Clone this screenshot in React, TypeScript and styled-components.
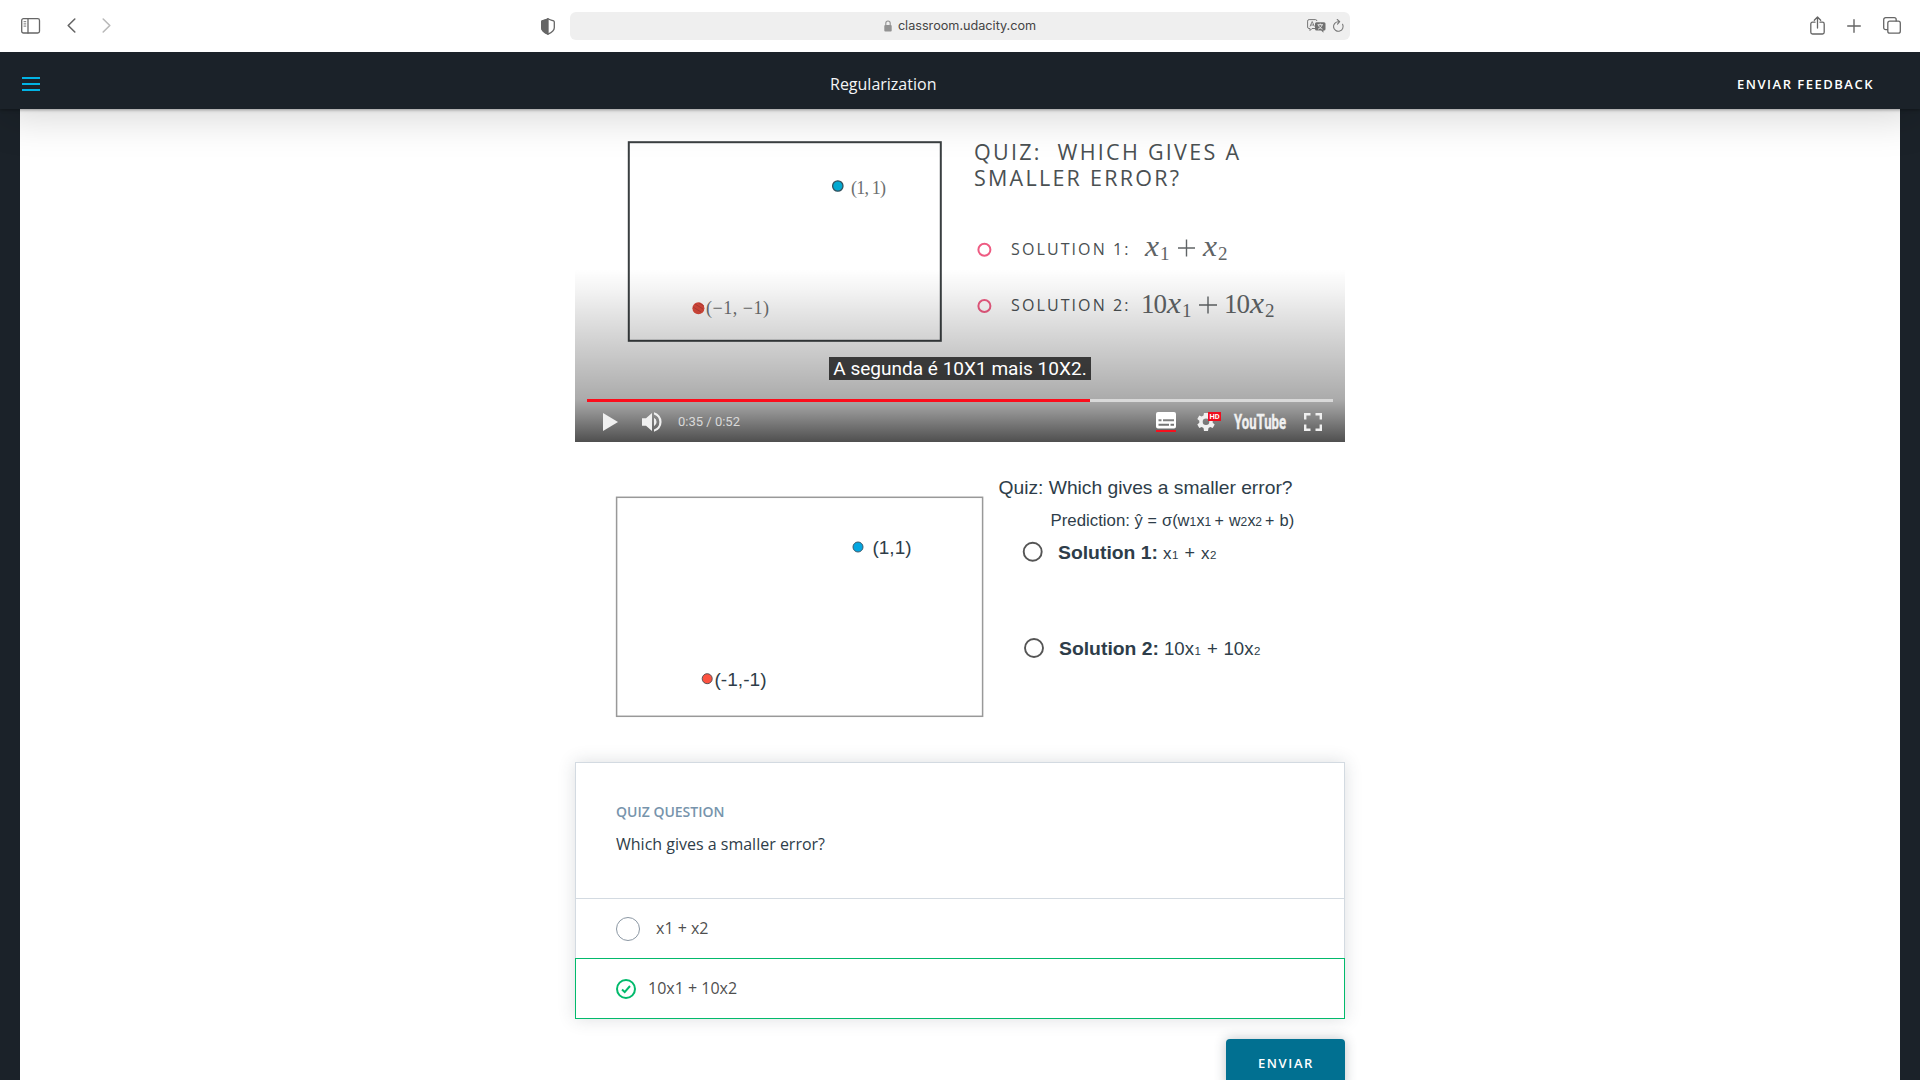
import React from "react";
import styled, { createGlobalStyle } from "styled-components";

const GlobalStyle = createGlobalStyle`
  *, *::before, *::after { box-sizing: border-box; }
  html, body { margin: 0; padding: 0; overflow: hidden; }
  body { font-family: "Open Sans", "Noto Sans", sans-serif; background: #1b2229; }
  svg { display: block; overflow: visible; }
`;

const Window = styled.div`
  width: 1920px;
  height: 1080px;
  overflow: hidden;
  display: flex;
  flex-direction: column;
`;

const BrowserBar = styled.div`
  flex: none;
  height: 52px;
  background: #fff;
  display: grid;
  grid-template-columns: 541px auto 1fr;
  align-items: center;
  padding-right: 19px;
  z-index: 3;
`;

const IconGroup = styled.div<{ $gap: number; $left?: number; $end?: boolean }>`
  display: flex;
  align-items: center;
  gap: ${(p) => p.$gap}px;
  padding-left: ${(p) => p.$left ?? 0}px;
  padding-bottom: 1px;
  justify-content: ${(p) => (p.$end ? "flex-end" : "flex-start")};
`;

const AddressGroup = styled.div`
  display: flex;
  align-items: center;
  gap: 15px;
`;

const AddressBar = styled.div`
  width: 780px;
  height: 28px;
  border-radius: 6px;
  background: #efefef;
  display: grid;
  grid-template-columns: 60px 1fr 60px;
  align-items: center;
  padding-right: 6px;
`;

const Address = styled.div`
  grid-column: 2;
  display: flex;
  align-items: center;
  justify-content: center;
  gap: 6px;
  padding: 0 0 1px 6px;
  font: 12.65px/18px Inter, sans-serif;
  color: #444;
`;

const Header = styled.header`
  flex: none;
  height: 57px;
  background: #1b2229;
  display: grid;
  grid-template-columns: 808px auto 1fr;
  align-items: center;
  padding: 7px 46px 0 22px;
  position: relative;
  z-index: 2;
  box-shadow: 0 1px 3px rgba(0, 0, 0, 0.35), 0 6px 44px rgba(0, 0, 0, 0.18);
`;

const MenuButton = styled.div`
  width: 18px;
  display: grid;
  gap: 4px;
`;

const MenuLine = styled.span`
  height: 2px;
  background: #02b3e4;
`;

const Title = styled.h1`
  margin: 0;
  font-size: 16px;
  line-height: 24px;
  font-weight: 400;
  color: #f4f5f6;
`;

const Feedback = styled.div`
  justify-self: end;
  font-size: 13px;
  line-height: 20px;
  font-weight: 600;
  letter-spacing: 1.5px;
  color: #fff;
`;

const Main = styled.main`
  flex: 1;
  min-height: 0;
  margin: 0 20px;
  background: #fff;
  display: flex;
  flex-direction: column;
  align-items: center;
`;

const Column = styled.div`
  width: 770px;
  display: flex;
  flex-direction: column;
`;

const Player = styled.section`
  height: 333px;
  display: grid;
  grid-template: 100% / 100%;
  background: #fff;
`;

const Frame = styled.div`
  grid-area: 1 / 1;
`;

const Overlay = styled.div`
  grid-area: 1 / 1;
  display: flex;
  flex-direction: column;
  align-items: stretch;
  padding: 248px 12px 0;
  background: linear-gradient(
    to bottom,
    rgba(0, 0, 0, 0) 160px,
    rgba(0, 0, 0, 0.045) 180px,
    rgba(0, 0, 0, 0.16) 225px,
    rgba(0, 0, 0, 0.25) 260px,
    rgba(0, 0, 0, 0.33) 290px,
    rgba(0, 0, 0, 0.43) 303px,
    rgba(0, 0, 0, 0.69) 333px
  );
`;

const Caption = styled.div`
  align-self: center;
  height: 23px;
  padding: 0 4.5px;
  background: rgba(8, 8, 8, 0.74);
  color: #fff;
  font: 19.05px/23px Roboto, sans-serif;
  white-space: nowrap;
`;

const Track = styled.div`
  margin-top: 19px;
  height: 3px;
  background: #d9d9d9;
`;

const Played = styled.div`
  width: 503px;
  height: 3px;
  background: #fb0d1b;
`;

const Controls = styled.div`
  height: 40px;
  display: flex;
  align-items: center;
  padding: 0 11px 0 16px;
`;

const Time = styled.div`
  margin-left: 16px;
  flex: 1;
  font: 13px/20px Roboto, sans-serif;
  color: #d9d9d9;
`;

const ControlIcon = styled.div<{ $left?: number }>`
  margin-left: ${(p) => p.$left ?? 0}px;
`;

const Figure = styled.div`
  height: 320px;
`;

const Card = styled.section`
  border: 1px solid #d3dae1;
  border-bottom: 0;
  background: #fff;
  box-shadow: 0 0 16px rgba(46, 61, 73, 0.17);
  height: 257px;
`;

const Prompt = styled.div`
  height: 135px;
  padding: 39px 40px 0;
`;

const Eyebrow = styled.div`
  font-size: 14px;
  line-height: 20px;
  font-weight: 600;
  color: #7794ac;
`;

const Question = styled.div`
  margin-top: 11px;
  font-size: 16px;
  line-height: 22px;
  color: #2e3d49;
`;

const Option = styled.div<{ $correct?: boolean }>`
  display: flex;
  align-items: center;
  height: ${(p) => (p.$correct ? 61 : 60)}px;
  margin: ${(p) => (p.$correct ? "0 -1px" : "0")};
  padding: 0 40px;
  border: ${(p) => (p.$correct ? "1px solid #02ba6c" : "0")};
  border-top: 1px solid ${(p) => (p.$correct ? "#02ba6c" : "#d3dae1")};
  gap: ${(p) => (p.$correct ? 12 : 16)}px;
  color: #4f4f4f;
`;

const OptionText = styled.span`
  padding-bottom: 2px;
  font-size: 16px;
  line-height: 22px;
`;

const Radio = styled.span`
  width: 24px;
  height: 24px;
  margin-top: 1px;
  border: 1px solid #8b97a3;
  border-radius: 50%;
`;

const Submit = styled.button`
  align-self: flex-end;
  margin-top: 20px;
  width: 119px;
  height: 49px;
  padding: 0 0 2px 1px;
  border: 0;
  border-radius: 4px;
  background: #017091;
  box-shadow: 0 0 12px rgba(46, 61, 73, 0.3);
  color: #fff;
  font: 600 13px/20px "Open Sans", sans-serif;
  letter-spacing: 1.6px;
`;

const SANS = '"Liberation Sans", Arial, sans-serif';
const SERIF = '"Liberation Serif", "Times New Roman", serif';
const OPEN = '"Open Sans", sans-serif';

type LabelProps = {
  x: number;
  y: number;
  size: number;
  width?: number;
  fill?: string;
  family?: string;
  weight?: number;
  italic?: boolean;
  glyphs?: boolean;
  children: string;
};

const LabelText = styled.text`
  white-space: pre;
`;

function Label({ x, y, size, width, fill = "#2e3d49", family = SANS, weight = 400, italic, glyphs, children }: LabelProps) {
  return (
    <LabelText
      x={x}
      y={y}
      fontSize={size}
      fontFamily={family}
      fontWeight={weight}
      fontStyle={italic ? "italic" : "normal"}
      fill={fill}
      textLength={width}
      lengthAdjust={glyphs ? "spacingAndGlyphs" : "spacing"}
    >
      {children}
    </LabelText>
  );
}

function LectureFrame() {
  const ink = "#4a5052";
  const math = { family: SERIF, fill: "#606466" };
  return (
    <svg width="770" height="333" viewBox="575 109 770 333">
      <rect x="628.8" y="142.2" width="312" height="198.6" fill="none" stroke="#3a3f41" strokeWidth="2" />
      <circle cx="837.8" cy="186" r="5.2" fill="#02a9d1" stroke="#33505c" strokeWidth="1.3" />
      <Label x={851} y={193.5} size={18} width={35} {...math} fill="#6d6f70">(1, 1)</Label>
      <circle cx="698.4" cy="308.3" r="6" fill="#dc4a3c" />
      <path d="M695 304l8 5M693 307l8 5M699 303l5 3" stroke="#b23a35" strokeWidth=".8" />
      <Label x={706} y={313.5} size={18} width={63} {...math} fill="#6d6f70">(−1, −1)</Label>
      <Label x={974} y={160.3} size={21.5} width={265} family={OPEN} fill={ink}>QUIZ:  WHICH GIVES A</Label>
      <Label x={974} y={186} size={21.5} width={205} family={OPEN} fill={ink}>SMALLER ERROR?</Label>
      {[249.7, 306].map((cy) => (
        <circle key={cy} cx="984.4" cy={cy} r="6" fill="none" stroke="#ee5b82" strokeWidth="2" />
      ))}
      <Label x={1011} y={255} size={16} width={117.5} family={OPEN} fill={ink}>SOLUTION 1:</Label>
      <Label x={1011} y={311.3} size={16} width={117.5} family={OPEN} fill={ink}>SOLUTION 2:</Label>
      <Label x={1145} y={255.5} size={29} width={14} italic glyphs {...math}>x</Label>
      <Label x={1160} y={259.5} size={19} {...math}>1</Label>
      <path d="M1178 248h17M1186.5 239.5v17M1199 305h18M1208 296.500v17" stroke="#606466" strokeWidth="1.4" />
      <Label x={1203} y={255.5} size={29} width={14} italic glyphs {...math}>x</Label>
      <Label x={1218} y={259.5} size={19} {...math}>2</Label>
      <Label x={1141} y={312.5} size={27} width={26} {...math}>10</Label>
      <Label x={1167} y={312.5} size={29} width={14} italic glyphs {...math}>x</Label>
      <Label x={1182} y={316.5} size={19} {...math}>1</Label>
      <Label x={1224} y={312.5} size={27} width={26} {...math}>10</Label>
      <Label x={1250} y={312.5} size={29} width={14} italic glyphs {...math}>x</Label>
      <Label x={1265} y={316.5} size={19} {...math}>2</Label>
    </svg>
  );
}

function SolutionFigure() {
  return (
    <svg width="770" height="320" viewBox="575 442 770 320">
      <rect x="616.6" y="497.3" width="366" height="219" fill="none" stroke="#999" strokeWidth="1.5" />
      <circle cx="858" cy="547" r="5" fill="#03a6e0" stroke="#3f5a6b" strokeWidth="1" />
      <Label x={872.5} y={554} size={19} width={39} glyphs>(1,1)</Label>
      <circle cx="707.2" cy="678.7" r="5" fill="#fd5240" stroke="#5a5255" strokeWidth="1" />
      <Label x={714.5} y={686} size={19} width={52} glyphs>(-1,-1)</Label>
      <Label x={998.5} y={494} size={19} width={294} glyphs>Quiz: Which gives a smaller error?</Label>
      <Label x={1050.5} y={525.7} size={16.5} width={79.5} glyphs>Prediction:</Label>
      <Label x={1134.5} y={525.7} size={16.5}>ŷ</Label>
      <Label x={1147.5} y={525.7} size={16}>=</Label>
      <Label x={1162} y={525.7} size={16.5} width={27.5} glyphs>σ(w</Label>
      <Label x={1189.5} y={525.7} size={12}>1</Label>
      <Label x={1196.5} y={525.7} size={16}>x</Label>
      <Label x={1204.5} y={525.7} size={12}>1</Label>
      <Label x={1214.5} y={525.7} size={16}>+</Label>
      <Label x={1229} y={525.7} size={16}>w</Label>
      <Label x={1240.5} y={525.7} size={12}>2</Label>
      <Label x={1247.5} y={525.7} size={16}>x</Label>
      <Label x={1255.3} y={525.7} size={12}>2</Label>
      <Label x={1265} y={525.7} size={16}>+</Label>
      <Label x={1279.5} y={525.7} size={16.5}>b)</Label>
      <circle cx="1032.7" cy="551.7" r="9" fill="none" stroke="#555" strokeWidth="1.9" />
      <Label x={1058} y={558.5} size={19} width={100} weight={700} glyphs>Solution 1:</Label>
      <Label x={1163} y={558.5} size={17}>x</Label>
      <Label x={1172} y={558.5} size={11.5}>1</Label>
      <Label x={1184.5} y={558.5} size={18}>+</Label>
      <Label x={1201} y={558.5} size={17}>x</Label>
      <Label x={1210} y={558.5} size={11.5}>2</Label>
      <circle cx="1034" cy="648" r="9" fill="none" stroke="#555" strokeWidth="1.9" />
      <Label x={1059} y={655} size={19} width={100} weight={700} glyphs>Solution 2:</Label>
      <Label x={1164} y={655} size={18.7} width={30} glyphs>10x</Label>
      <Label x={1194.5} y={655} size={11.5}>1</Label>
      <Label x={1207} y={655} size={18.5}>+</Label>
      <Label x={1223.5} y={655} size={18.7} width={30} glyphs>10x</Label>
      <Label x={1254} y={655} size={11.5}>2</Label>
    </svg>
  );
}

const stroke = { fill: "none", stroke: "#666", strokeWidth: 1.3, strokeLinecap: "round", strokeLinejoin: "round" } as const;

export default function App() {
  return (
    <>
      <GlobalStyle />
      <Window>
        <BrowserBar>
          <IconGroup $gap={27} $left={21}>
            <svg width="19" height="16" viewBox="0 0 19 16" {...stroke}>
              <rect x=".7" y=".7" width="17.8" height="14.3" rx="1.8" />
              <path d="M7 1v14" />
              <path d="M3 3.700h1.800M3 5.900h1.800M3 8.100h1.800" strokeWidth=".9" />
            </svg>
            <IconGroup $gap={26}>
              <svg width="9" height="15" viewBox="0 0 9 15" {...stroke} strokeWidth={1.6}>
                <path d="M7.800 1L1.200 7.500l6.600 6.500" />
              </svg>
              <svg width="9" height="15" viewBox="0 0 9 15" {...stroke} stroke="#b9b9b9" strokeWidth={1.6}>
                <path d="M1.200 1l6.600 6.500L1.200 14" />
              </svg>
            </IconGroup>
          </IconGroup>
          <AddressGroup>
            <svg width="14" height="17" viewBox="0 0 14 17" {...stroke}>
              <path d="M7 .8c1.600 1.200 4 1.500 5.600 2.100.5.200.7.500.7 1v5.800c0 3-3 5-6.300 6.500C3.700 14.700.7 12.700.7 9.700V3.900c0-.5.200-.8.700-1C3 2.300 5.400 2 7 .8z" />
              <path d="M7 .8v15.400C3.700 14.700.7 12.700.7 9.700V3.900c0-.5.200-.8.700-1C3 2.300 5.400 2 7 .8z" fill="#666" />
            </svg>
            <AddressBar>
              <Address>
                <svg width="8" height="12" viewBox="0 0 8 12">
                  <rect x=".3" y="5" width="7.4" height="6.500" rx="1" fill="#929292" />
                  <path d="M1.800 5V3.200a2.200 2.200 0 014.400 0V5" fill="none" stroke="#929292" strokeWidth="1.1" />
                </svg>
                classroom.udacity.com
              </Address>
              <IconGroup $gap={7} $end>
                <svg width="19" height="14" viewBox="0 0 19 14">
                  <path d="M9 9.500H5l-2 2v-2H2A1.500 1.500 0 01.600 8V2.100A1.500 1.500 0 012.100.600h6.300A1.500 1.500 0 019.900 2" fill="none" stroke="#777" strokeWidth="1" />
                  <path d="M3 7.500l2.200-5 2.200 5M3.700 6h3" fill="none" stroke="#777" strokeWidth=".9" />
                  <path d="M9.500 3.200h7.500a1.500 1.500 0 011.500 1.500v5.300a1.500 1.500 0 01-1.500 1.500h-.6v2.200l-2.200-2.200H9.500A1.500 1.500 0 018 10V4.700a1.500 1.500 0 011.500-1.500z" fill="#707070" />
                  <path d="M10.500 5.700h5.500M13.200 4.500v1.200M11.500 6c.5 2 2 3.500 4 4.200M15 6c-.5 2-2 3.500-4 4.200" fill="none" stroke="#efefef" strokeWidth=".9" />
                </svg>
                <svg width="11" height="13" viewBox="0 0 11 13" {...stroke} stroke="#777" strokeWidth={1.1}>
                  <path d="M9.600 5.300A4.800 4.800 0 115.500 2.700M4.200.500l2.500 2.200-2.200 2.500" />
                </svg>
              </IconGroup>
            </AddressBar>
          </AddressGroup>
          <IconGroup $gap={22} $end>
            <svg width="15" height="19" viewBox="0 0 15 19" {...stroke}>
              <path d="M5 6.200H2.500A1.700 1.700 0 00.800 7.900v8.400A1.700 1.700 0 002.500 18h10a1.700 1.700 0 001.700-1.700V7.900a1.700 1.700 0 00-1.700-1.700H10M7.500 12V1.200M4.300 4.200l3.200-3.200 3.200 3.200" />
            </svg>
            <svg width="14" height="14" viewBox="0 0 14 14" {...stroke} strokeWidth={1.4}>
              <path d="M7 .7v12.600M.7 7h12.600" />
            </svg>
            <svg width="18" height="17" viewBox="0 0 18 17" {...stroke}>
              <rect x="4.800" y="4.200" width="12.500" height="12" rx="2" />
              <path d="M4.500 12.700H2.700a2 2 0 01-2-2v-8a2 2 0 012-2h8.500a2 2 0 012 2v1.200" />
            </svg>
          </IconGroup>
        </BrowserBar>

        <Header>
          <MenuButton>
            <MenuLine />
            <MenuLine />
            <MenuLine />
          </MenuButton>
          <Title>Regularization</Title>
          <Feedback>ENVIAR FEEDBACK</Feedback>
        </Header>

        <Main>
          <Column>
            <Player>
              <Frame>
                <LectureFrame />
              </Frame>
              <Overlay>
                <Caption>A segunda é 10X1 mais 10X2.</Caption>
                <Track>
                  <Played />
                </Track>
                <Controls>
                  <svg width="15" height="18" viewBox="0 0 15 18">
                    <path d="M0 0l15 9-15 9z" fill="#f0f0f0" />
                  </svg>
                  <ControlIcon $left={24}>
                    <svg width="20" height="20" viewBox="0 0 20 20" fill="#f0f0f0">
                      <path d="M0 6.300h4L10 1v18l-6-5.300H0z" />
                      <path d="M12 5.800a4.700 4.700 0 010 8.400z" />
                      <path d="M12 .300a10 10 0 010 19.400v-2.300a7.800 7.800 0 000-14.800z" />
                    </svg>
                  </ControlIcon>
                  <Time>0:35 / 0:52</Time>
                  <svg width="20" height="20" viewBox="0 0 20 20">
                    <path fillRule="evenodd" d="M2 0h16a2 2 0 012 2v12.500a2 2 0 01-2 2H2a2 2 0 01-2-2V2a2 2 0 012-2zM2.500 7.300v2h3v-2zM7 7.300v2h11v-2zM2.500 11.800v2h10.500v-2zM14.500 11.800v2H18v-2z" fill="#fff" />
                    <rect y="18" width="20" height="2" fill="#f5101d" />
                  </svg>
                  <ControlIcon $left={21}>
                    <svg width="25" height="20" viewBox="0 0 25 20">
                      <path fillRule="evenodd" d="M7 1h4l.5 2.500 1.800 1 2.400-.9 2 3.400-2 1.700v2.100l2 1.700-2 3.400-2.400-.9-1.800 1L11 19H7l-.5-3-1.800-1-2.400.9-2-3.400 2-1.700V8.700l-2-1.700 2-3.400 2.400.9 1.800-1zM9 6.500a3.300 3.300 0 100 6.600 3.300 3.300 0 000-6.600z" fill="#f0f0f0" />
                      <rect x="11" y="0" width="13" height="9" fill="#ef0d1d" />
                      <text x="12.5" y="7.200" fontSize="7.500" fontWeight="700" fontFamily="Roboto, sans-serif" fill="#fff" textLength="10">HD</text>
                    </svg>
                  </ControlIcon>
                  <ControlIcon $left={12}>
                    <svg width="52" height="20" viewBox="0 0 52 20">
                      <text x="0" y="17.300" fontSize="21" fontWeight="700" fontFamily="Roboto, sans-serif" fill="#f0f0f0" stroke="#f0f0f0" strokeWidth=".4" textLength="52" lengthAdjust="spacingAndGlyphs">YouTube</text>
                    </svg>
                  </ControlIcon>
                  <ControlIcon $left={18}>
                    <svg width="18" height="18" viewBox="0 0 18 18">
                      <path d="M1.200 6.500V1.200h5.300M11.500 1.200h5.300v5.300M16.800 11.500v5.300h-5.300M6.500 16.800H1.200v-5.300" fill="none" stroke="#f0f0f0" strokeWidth="2.400" />
                    </svg>
                  </ControlIcon>
                </Controls>
              </Overlay>
            </Player>

            <Figure>
              <SolutionFigure />
            </Figure>

            <Card>
              <Prompt>
                <Eyebrow>QUIZ QUESTION</Eyebrow>
                <Question>Which gives a smaller error?</Question>
              </Prompt>
              <Option>
                <Radio />
                <OptionText>x1 + x2</OptionText>
              </Option>
              <Option $correct>
                <svg width="20" height="20" viewBox="0 0 20 20" fill="none" stroke="#02ba6c" strokeWidth="2">
                  <circle cx="10" cy="10" r="9" />
                  <path d="M6 10.600l2.700 2.500L14 7" />
                </svg>
                <OptionText>10x1 + 10x2</OptionText>
              </Option>
            </Card>
            <Submit>ENVIAR</Submit>
          </Column>
        </Main>
      </Window>
    </>
  );
}
